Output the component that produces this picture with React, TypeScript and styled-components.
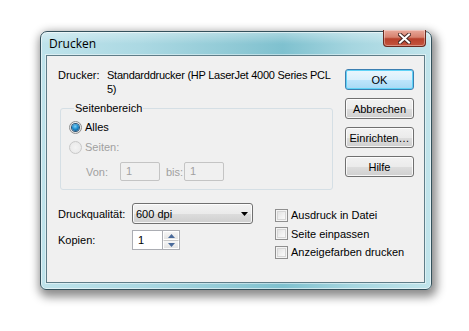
import React from "react";
import styled, { createGlobalStyle } from "styled-components";

const Global = createGlobalStyle`
  html, body { margin: 0; padding: 0; background: #ffffff; }
  body { font-family: "Liberation Sans", Arial, sans-serif; font-size: 11px; color: #000; }
  * { box-sizing: border-box; }
`;

const Page = styled.div`
  width: 469px;
  height: 331px;
  padding: 31px 0 0 40px;
  display: flex;
  align-items: flex-start;
  background: #fff;
`;

const Window = styled.div`
  width: 392px;
  height: 259px;
  border: 1px solid #34515c;
  border-radius: 7px 7px 6px 6px;
  padding: 0 6px 6px 5px;
  display: flex;
  flex-direction: column;
  background:
    linear-gradient(180deg, rgba(255,255,255,0.35) 0px, rgba(255,255,255,0) 12px),
    linear-gradient(90deg, #bfe3eb 0%, #acd9e3 25%, #8fc9d5 50%, #7fc1cf 62%, #a6d6e0 80%, #c1e4eb 100%);
  box-shadow: 2px 4px 10px 3px rgba(0,0,0,0.45), inset 0 0 0 1px rgba(255,255,255,0.55);
`;

const TitleBar = styled.div`
  height: 23px;
  display: flex;
  align-items: flex-start;
`;

const Title = styled.div`
  font-family: "Open Sans", "Liberation Sans", sans-serif;
  font-size: 12px;
  line-height: 23px;
  padding-left: 3px;
  color: #000;
  flex: 1;
`;

const CloseButton = styled.div`
  width: 43px;
  height: 17px;
  margin-top: -2px;
  margin-right: -1px;
  border: 1px solid #6a2a20;
  border-top: none;
  border-radius: 0 0 4px 4px;
  background: linear-gradient(180deg, #e9a99b 0%, #d7826f 45%, #b8412c 55%, #c4563f 100%);
  box-shadow: inset 0 0 0 1px rgba(255,255,255,0.35);
  display: flex;
  align-items: center;
  justify-content: center;
`;

const Client = styled.div`
  width: 379px;
  height: 228px;
  border: 1px solid #5f7d88;
  background: #f0f0f0;
  padding: 12px 9px 0 11px;
  display: flex;
  flex-direction: column;
  box-shadow: 0 0 0 1px rgba(255,255,255,0.45);
`;

const TopSection = styled.div`
  display: flex;
  gap: 12px;
`;

const LeftTop = styled.div`
  width: 275px;
  display: flex;
  flex-direction: column;
`;

const PrinterRow = styled.div`
  display: flex;
  line-height: 14px;
`;

const PrinterLabel = styled.div`
  width: 49px;
  flex: none;
`;

const PrinterValue = styled.div`
  width: 226px;
  white-space: nowrap;
  letter-spacing: -0.25px;
`;

const Group = styled.fieldset`
  margin: 5px 0 0 2px;
  width: 273px;
  border: 1px solid #d5dfe5;
  border-radius: 3px;
  padding: 5px 0 8px 8px;
  display: flex;
  flex-direction: column;
  gap: 6px;
`;

const Legend = styled.legend`
  margin-left: 5px;
  padding: 0 1px;
  line-height: 14px;
  color: #000;
`;

const RadioRow = styled.label<{ $disabled?: boolean }>`
  display: flex;
  align-items: center;
  gap: 3px;
  height: 14px;
  color: ${(p) => (p.$disabled ? "#a0a0a0" : "#000")};
`;

const RadioCircle = styled.span<{ $checked?: boolean; $disabled?: boolean }>`
  width: 13px;
  height: 13px;
  border-radius: 50%;
  border: 1px solid ${(p) => (p.$disabled ? "#c8c8c8" : "#8e8f8f")};
  background: ${(p) =>
    p.$disabled
      ? "radial-gradient(circle at 50% 50%, #f4f4f4 0%, #e6e6e6 100%)"
      : "radial-gradient(circle at 50% 40%, #ffffff 0%, #e0e0e0 80%)"};
  display: flex;
  align-items: center;
  justify-content: center;
  flex: none;
  &::after {
    content: "";
    display: ${(p) => (p.$checked ? "block" : "none")};
    width: 7px;
    height: 7px;
    border-radius: 50%;
    background: radial-gradient(circle at 45% 35%, #7fd0f5 0%, #1f8fd0 45%, #0c3f6e 100%);
    box-shadow: 0 0 0 1px #2a5477;
  }
`;

const RangeRow = styled.div`
  display: flex;
  align-items: center;
  padding-left: 17px;
  height: 19px;
  margin-top: 2px;
  color: #a0a0a0;
`;

const RangeLabel = styled.span<{ $w: number; $pad?: number }>`
  width: ${(p) => p.$w}px;
  padding-left: ${(p) => p.$pad ?? 0}px;
  flex: none;
`;

const DisabledInput = styled.div`
  width: 40px;
  height: 19px;
  border: 1px solid #c4c4c4;
  border-radius: 2px;
  background: #f0f0f0;
  color: #a0a0a0;
  padding-left: 5px;
  line-height: 17px;
  flex: none;
`;

const ButtonColumn = styled.div`
  width: 69px;
  margin-top: 1px;
  display: flex;
  flex-direction: column;
  gap: 8px;
`;

const Button = styled.div<{ $default?: boolean }>`
  height: 21px;
  border: 1px solid ${(p) => (p.$default ? "#3c7fb1" : "#707070")};
  border-radius: 3px;
  background: ${(p) =>
    p.$default
      ? "linear-gradient(180deg, #eaf6fd 0%, #d9f0fc 50%, #bee6fd 51%, #a7d9f5 100%)"
      : "linear-gradient(180deg, #f2f2f2 0%, #ebebeb 50%, #dddddd 51%, #cfcfcf 100%)"};
  box-shadow: inset 0 0 0 1px ${(p) => (p.$default ? "#5fd3f7" : "rgba(255,255,255,0.8)")};
  display: flex;
  align-items: center;
  justify-content: center;
  white-space: nowrap;
  color: #000;
`;

const BottomSection = styled.div`
  display: flex;
  margin-top: 13px;
  gap: 22px;
`;

const LeftBottom = styled.div`
  width: 195px;
  display: flex;
  flex-direction: column;
  gap: 6px;
`;

const FieldRow = styled.div`
  display: flex;
  align-items: center;
`;

const FieldLabel = styled.span`
  width: 74px;
  flex: none;
`;

const Select = styled.div`
  width: 122px;
  height: 21px;
  border: 1px solid #707070;
  border-radius: 3px;
  background: linear-gradient(180deg, #f2f2f2 0%, #ebebeb 50%, #dddddd 51%, #cfcfcf 100%);
  box-shadow: inset 0 0 0 1px rgba(255,255,255,0.8);
  display: flex;
  align-items: center;
  padding: 0 4px 0 3px;
`;

const SelectText = styled.span`
  flex: 1;
`;

const Spinner = styled.div`
  width: 48px;
  height: 20px;
  display: flex;
  border: 1px solid #abadb3;
  background: #fff;
`;

const SpinInput = styled.div`
  flex: 1;
  padding-left: 5px;
  line-height: 18px;
`;

const SpinButtons = styled.div`
  width: 17px;
  display: flex;
  flex-direction: column;
  border-left: 1px solid #abadb3;
`;

const SpinButton = styled.div`
  flex: 1;
  background: linear-gradient(180deg, #f6f6f6 0%, #e4e4e4 100%);
  border: 1px solid #fff;
  display: flex;
  align-items: center;
  justify-content: center;
  & + & { border-top: 1px solid #c8c8c8; }
`;

const CheckColumn = styled.div`
  display: flex;
  flex-direction: column;
  margin-top: 5px;
  gap: 4.5px;
`;

const CheckRow = styled.label`
  display: flex;
  align-items: center;
  gap: 3px;
  height: 14px;
`;

const CheckBox = styled.span`
  width: 13px;
  height: 13px;
  border: 1px solid #8f8f8f;
  background: linear-gradient(135deg, #dcdcdc 0%, #f3f3f3 60%, #ffffff 100%);
  box-shadow: inset 0 0 0 1px #f4f4f4, inset 0 0 0 2px #d6d6d6;
  flex: none;
`;

const Arrow = ({ up }: { up?: boolean }) => (
  <svg width="7" height="4" viewBox="0 0 7 4">
    <path d={up ? "M0 4 L3.5 0 L7 4 Z" : "M0 0 L7 0 L3.5 4 Z"} fill="#4a6a9a" />
  </svg>
);

export default function App() {
  return (
    <>
      <Global />
      <Page>
        <Window>
          <TitleBar>
            <Title>Drucken</Title>
            <CloseButton>
              <svg width="13" height="11" viewBox="0 0 13 11">
                <path d="M2 1.5 L11 9.5 M11 1.5 L2 9.5" stroke="#4b2a26" strokeWidth="4" strokeLinecap="square" />
                <path d="M2 1.5 L11 9.5 M11 1.5 L2 9.5" stroke="#ffffff" strokeWidth="2" strokeLinecap="square" />
              </svg>
            </CloseButton>
          </TitleBar>
          <Client>
            <TopSection>
              <LeftTop>
                <PrinterRow>
                  <PrinterLabel>Drucker:</PrinterLabel>
                  <PrinterValue>
                    Standarddrucker (HP LaserJet 4000 Series PCL
                    <br />
                    5)
                  </PrinterValue>
                </PrinterRow>
                <Group>
                  <Legend>Seitenbereich</Legend>
                  <RadioRow>
                    <RadioCircle $checked />
                    Alles
                  </RadioRow>
                  <RadioRow $disabled>
                    <RadioCircle $disabled />
                    Seiten:
                  </RadioRow>
                  <RangeRow>
                    <RangeLabel $w={34}>Von:</RangeLabel>
                    <DisabledInput>1</DisabledInput>
                    <RangeLabel $w={24} $pad={6}>bis:</RangeLabel>
                    <DisabledInput>1</DisabledInput>
                  </RangeRow>
                </Group>
              </LeftTop>
              <ButtonColumn>
                <Button $default>OK</Button>
                <Button>Abbrechen</Button>
                <Button>Einrichten…</Button>
                <Button>Hilfe</Button>
              </ButtonColumn>
            </TopSection>
            <BottomSection>
              <LeftBottom>
                <FieldRow>
                  <FieldLabel>Druckqualität:</FieldLabel>
                  <Select>
                    <SelectText>600 dpi</SelectText>
                    <svg width="7" height="4" viewBox="0 0 7 4">
                      <path d="M0 0 L7 0 L3.5 4 Z" fill="#000" />
                    </svg>
                  </Select>
                </FieldRow>
                <FieldRow>
                  <FieldLabel>Kopien:</FieldLabel>
                  <Spinner>
                    <SpinInput>1</SpinInput>
                    <SpinButtons>
                      <SpinButton><Arrow up /></SpinButton>
                      <SpinButton><Arrow /></SpinButton>
                    </SpinButtons>
                  </Spinner>
                </FieldRow>
              </LeftBottom>
              <CheckColumn>
                <CheckRow><CheckBox />Ausdruck in Datei</CheckRow>
                <CheckRow><CheckBox />Seite einpassen</CheckRow>
                <CheckRow><CheckBox />Anzeigefarben drucken</CheckRow>
              </CheckColumn>
            </BottomSection>
          </Client>
        </Window>
      </Page>
    </>
  );
}
